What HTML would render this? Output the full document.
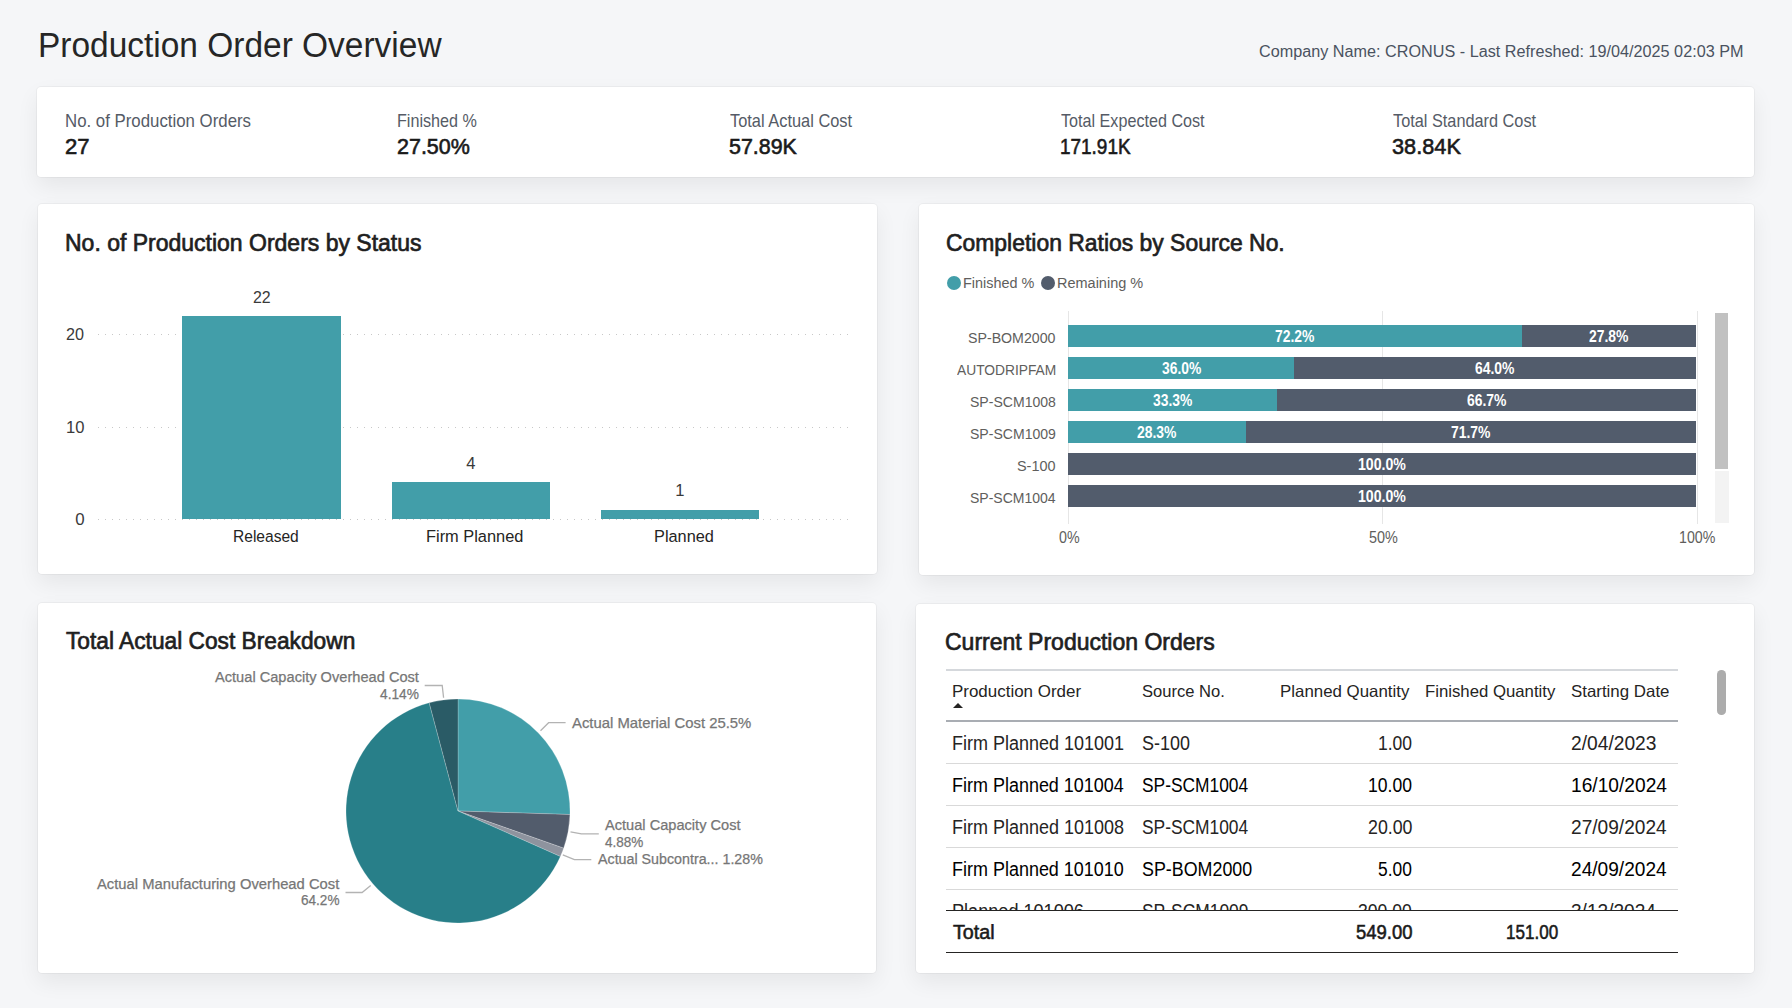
<!DOCTYPE html>
<html><head><meta charset="utf-8"><title>Production Order Overview</title>
<style>
html,body{margin:0;padding:0;}
body{width:1792px;height:1008px;background:#f5f6f8;position:relative;overflow:hidden;font-family:"Liberation Sans", sans-serif;}
.card{position:absolute;background:#fff;border-radius:4px;box-shadow:0 0 0 1px rgba(0,0,0,0.035),0 9px 22px rgba(0,0,0,0.065);}
.t{position:absolute;white-space:nowrap;line-height:1;transform-origin:0 0;}
.r{position:absolute;}
.grid{position:absolute;left:98px;width:751px;height:1px;background-image:linear-gradient(to right,#c8c8c8 0 1.3px,transparent 1.3px);background-size:7px 1px;}
.clip{position:absolute;overflow:hidden;}
</style></head><body>
<div class="card" style="left:37.3px;top:86.9px;width:1716.8px;height:89.9px"></div><div class="card" style="left:37.5px;top:203.9px;width:839.3px;height:369.9px"></div><div class="card" style="left:918.5px;top:203.9px;width:835.6px;height:370.9px"></div><div class="card" style="left:37.5px;top:602.5px;width:838.3px;height:370.1px"></div><div class="card" style="left:916px;top:603.5px;width:837.6px;height:369.1px"></div>
<div class="grid" style="top:334.1px;"></div><div class="grid" style="top:426.7px;"></div><div class="grid" style="top:519.2px;"></div><div class="r" style="left:182.2px;top:315.8px;width:158.6px;height:203.3px;background:#429ea9"></div><div class="r" style="left:391.6px;top:482.3px;width:158.6px;height:36.8px;background:#429ea9"></div><div class="r" style="left:600.8px;top:510.0px;width:158.6px;height:9.1px;background:#429ea9"></div><div class="r" style="left:1068.2px;top:311px;width:1px;height:213px;background:#e6e6e6"></div><div class="r" style="left:1382.3px;top:311px;width:1px;height:213px;background:#e6e6e6"></div><div class="r" style="left:1697px;top:311px;width:1px;height:213px;background:#e6e6e6"></div><div class="r" style="left:1068.1px;top:325.1px;width:453.56px;height:22.2px;background:#429ea9"></div><div class="r" style="left:1521.66px;top:325.1px;width:174.64px;height:22.2px;background:#525c6c"></div><div class="r" style="left:1068.1px;top:357.1px;width:226.15px;height:22.2px;background:#429ea9"></div><div class="r" style="left:1294.25px;top:357.1px;width:402.05px;height:22.2px;background:#525c6c"></div><div class="r" style="left:1068.1px;top:389.1px;width:209.19px;height:22.2px;background:#429ea9"></div><div class="r" style="left:1277.29px;top:389.1px;width:419.01px;height:22.2px;background:#525c6c"></div><div class="r" style="left:1068.1px;top:421.1px;width:177.78px;height:22.2px;background:#429ea9"></div><div class="r" style="left:1245.88px;top:421.1px;width:450.42px;height:22.2px;background:#525c6c"></div><div class="r" style="left:1068.10px;top:453.1px;width:628.20px;height:22.2px;background:#525c6c"></div><div class="r" style="left:1068.10px;top:485.1px;width:628.20px;height:22.2px;background:#525c6c"></div><div class="r" style="left:947px;top:275.6px;width:14px;height:14px;border-radius:50%;background:#429ea9"></div><div class="r" style="left:1041px;top:275.6px;width:14px;height:14px;border-radius:50%;background:#525c6c"></div><div class="r" style="left:1715px;top:470.6px;width:13.5px;height:52.8px;background:#f3f3f3"></div><div class="r" style="left:1715px;top:313.2px;width:13px;height:155.6px;background:#c1c1c1"></div><div class="r" style="left:946px;top:669px;width:732px;height:2px;background:#d5d8dc"></div><div class="r" style="left:946px;top:720px;width:732px;height:2px;background:#a9adb3"></div><div class="r" style="left:946px;top:762.8px;width:732px;height:1px;background:#d9d9d9"></div><div class="r" style="left:946px;top:804.9px;width:732px;height:1px;background:#d9d9d9"></div><div class="r" style="left:946px;top:847.0px;width:732px;height:1px;background:#d9d9d9"></div><div class="r" style="left:946px;top:888.8px;width:732px;height:1px;background:#d9d9d9"></div><div class="r" style="left:946px;top:951.8px;width:732px;height:1.5px;background:#252423"></div><div class="r" style="left:952.8px;top:702.7px;width:0;height:0;border-left:5px solid transparent;border-right:5px solid transparent;border-bottom:5.5px solid #252423"></div><div class="r" style="left:1717px;top:670.3px;width:8.7px;height:45px;border-radius:4.35px;background:#acacac"></div>
<svg class="r" style="left:0;top:0" width="1792" height="1008" viewBox="0 0 1792 1008"><path d="M458,811 L458.00,699.00 A112,112 0 0 1 569.94,814.52 Z" fill="#429ea9" stroke="rgba(255,255,255,0.35)" stroke-width="0.6"/><path d="M458,811 L569.94,814.52 A112,112 0 0 1 563.66,848.14 Z" fill="#525c6c" stroke="rgba(255,255,255,0.35)" stroke-width="0.6"/><path d="M458,811 L563.66,848.14 A112,112 0 0 1 560.34,856.51 Z" fill="#8e939e" stroke="rgba(255,255,255,0.35)" stroke-width="0.6"/><path d="M458,811 L560.34,856.51 A112,112 0 1 1 429.19,702.77 Z" fill="#287f89" stroke="rgba(255,255,255,0.35)" stroke-width="0.6"/><path d="M458,811 L429.19,702.77 A112,112 0 0 1 458.00,699.00 Z" fill="#2a5b66" stroke="rgba(255,255,255,0.35)" stroke-width="0.6"/><polyline points="424.7,685.5 442.2,685.5 443.6,697.8" fill="none" stroke="#b3b3b3" stroke-width="1.3"/><polyline points="540.5,730.7 548.6,722.7 565.6,722.7" fill="none" stroke="#b3b3b3" stroke-width="1.3"/><polyline points="570.5,831.8 581.4,833.9 598.8,833.9" fill="none" stroke="#b3b3b3" stroke-width="1.3"/><polyline points="562.8,854.9 574.4,859.7 591.3,859.7" fill="none" stroke="#b3b3b3" stroke-width="1.3"/><polyline points="345.5,892.5 362.1,892.5 370.7,885.5" fill="none" stroke="#b3b3b3" stroke-width="1.3"/></svg>
<div class="t" style="left:37.99px;top:27.65px;font-size:35.47px;color:#262626;transform:scaleX(0.9434);">Production Order Overview</div><div class="t" style="left:1259.49px;top:43.44px;font-size:16.42px;color:#4a5260;transform:scaleX(0.9875);">Company Name: CRONUS - Last Refreshed: 19/04/2025 02:03 PM</div><div class="t" style="left:64.79px;top:112.63px;font-size:17.73px;color:#555b66;transform:scaleX(0.9491);">No. of Production Orders</div><div class="t" style="left:65.06px;top:136.42px;font-size:22.09px;color:#1a1a1a;-webkit-text-stroke:0.6px #1a1a1a;">27</div><div class="t" style="left:396.74px;top:112.63px;font-size:17.73px;color:#555b66;transform:scaleX(0.9119);">Finished %</div><div class="t" style="left:396.99px;top:136.42px;font-size:22.09px;color:#1a1a1a;-webkit-text-stroke:0.6px #1a1a1a;transform:scaleX(0.9729);">27.50%</div><div class="t" style="left:729.74px;top:112.63px;font-size:17.73px;color:#555b66;transform:scaleX(0.9252);">Total Actual Cost</div><div class="t" style="left:729.33px;top:136.42px;font-size:22.09px;color:#1a1a1a;-webkit-text-stroke:0.6px #1a1a1a;transform:scaleX(0.9697);">57.89K</div><div class="t" style="left:1061.15px;top:112.63px;font-size:17.73px;color:#555b66;transform:scaleX(0.9112);">Total Expected Cost</div><div class="t" style="left:1060.22px;top:136.42px;font-size:22.09px;color:#1a1a1a;-webkit-text-stroke:0.6px #1a1a1a;transform:scaleX(0.8576);">171.91K</div><div class="t" style="left:1392.75px;top:112.63px;font-size:17.73px;color:#555b66;transform:scaleX(0.9195);">Total Standard Cost</div><div class="t" style="left:1392.32px;top:136.42px;font-size:22.09px;color:#1a1a1a;-webkit-text-stroke:0.6px #1a1a1a;transform:scaleX(0.9842);">38.84K</div><div class="t" style="left:65.10px;top:231.79px;font-size:23.55px;color:#1f1f1f;-webkit-text-stroke:0.7px #1f1f1f;transform:scaleX(0.9764);">No. of Production Orders by Status</div><div class="t" style="left:945.53px;top:231.79px;font-size:23.55px;color:#1f1f1f;-webkit-text-stroke:0.7px #1f1f1f;transform:scaleX(0.9730);">Completion Ratios by Source No.</div><div class="t" style="left:66.14px;top:630.39px;font-size:23.55px;color:#1f1f1f;-webkit-text-stroke:0.7px #1f1f1f;transform:scaleX(0.9651);">Total Actual Cost Breakdown</div><div class="t" style="left:944.52px;top:631.13px;font-size:23.26px;color:#1f1f1f;-webkit-text-stroke:0.7px #1f1f1f;transform:scaleX(0.9893);">Current Production Orders</div><div class="t" style="left:66.49px;top:326.57px;font-size:16.86px;color:#3a3a3a;transform:scaleX(0.9605);">20</div><div class="t" style="left:65.86px;top:420.07px;font-size:16.86px;color:#3a3a3a;transform:scaleX(0.9838);">10</div><div class="t" style="left:75.14px;top:511.77px;font-size:16.86px;color:#3a3a3a;">0</div><div class="t" style="left:252.65px;top:289.72px;font-size:16.57px;color:#3a3a3a;transform:scaleX(0.9628);">22</div><div class="t" style="left:466.17px;top:455.57px;font-size:16.57px;color:#3a3a3a;">4</div><div class="t" style="left:675.21px;top:483.32px;font-size:16.57px;color:#3a3a3a;">1</div><div class="t" style="left:233.08px;top:528.97px;font-size:16.86px;color:#252423;transform:scaleX(0.9235);">Released</div><div class="t" style="left:426.22px;top:528.97px;font-size:16.86px;color:#252423;transform:scaleX(0.9714);">Firm Planned</div><div class="t" style="left:654.13px;top:528.97px;font-size:16.86px;color:#252423;transform:scaleX(0.9679);">Planned</div><div class="t" style="left:962.87px;top:275.99px;font-size:14.90px;color:#605e5c;transform:scaleX(0.9675);">Finished %</div><div class="t" style="left:1056.97px;top:275.99px;font-size:14.90px;color:#605e5c;transform:scaleX(0.9730);">Remaining %</div><div class="t" style="left:968.06px;top:329.68px;font-size:15.55px;color:#605e5c;transform:scaleX(0.9119);">SP-BOM2000</div><div class="t" style="left:956.80px;top:361.68px;font-size:15.55px;color:#605e5c;transform:scaleX(0.8865);">AUTODRIPFAM</div><div class="t" style="left:969.86px;top:393.68px;font-size:15.55px;color:#605e5c;transform:scaleX(0.9035);">SP-SCM1008</div><div class="t" style="left:969.86px;top:425.68px;font-size:15.55px;color:#605e5c;transform:scaleX(0.9035);">SP-SCM1009</div><div class="t" style="left:1017.05px;top:457.68px;font-size:15.55px;color:#605e5c;transform:scaleX(0.9279);">S-100</div><div class="t" style="left:969.86px;top:489.68px;font-size:15.55px;color:#605e5c;transform:scaleX(0.9012);">SP-SCM1004</div><div class="t" style="left:1058.55px;top:529.73px;font-size:15.84px;color:#605e5c;transform:scaleX(0.9005);">0%</div><div class="t" style="left:1368.55px;top:529.73px;font-size:15.84px;color:#605e5c;transform:scaleX(0.9108);">50%</div><div class="t" style="left:1679.11px;top:529.73px;font-size:15.84px;color:#605e5c;transform:scaleX(0.8961);">100%</div><div class="t" style="left:1275.05px;top:329.31px;font-size:15.99px;color:#ffffff;font-weight:bold;transform:scaleX(0.8698);">72.2%</div><div class="t" style="left:1589.15px;top:329.31px;font-size:15.99px;color:#ffffff;font-weight:bold;transform:scaleX(0.8698);">27.8%</div><div class="t" style="left:1161.56px;top:361.31px;font-size:15.99px;color:#ffffff;font-weight:bold;transform:scaleX(0.8650);">36.0%</div><div class="t" style="left:1475.44px;top:361.31px;font-size:15.99px;color:#ffffff;font-weight:bold;transform:scaleX(0.8698);">64.0%</div><div class="t" style="left:1153.08px;top:393.31px;font-size:15.99px;color:#ffffff;font-weight:bold;transform:scaleX(0.8650);">33.3%</div><div class="t" style="left:1466.96px;top:393.31px;font-size:15.99px;color:#ffffff;font-weight:bold;transform:scaleX(0.8698);">66.7%</div><div class="t" style="left:1137.16px;top:425.31px;font-size:15.99px;color:#ffffff;font-weight:bold;transform:scaleX(0.8698);">28.3%</div><div class="t" style="left:1451.26px;top:425.31px;font-size:15.99px;color:#ffffff;font-weight:bold;transform:scaleX(0.8698);">71.7%</div><div class="t" style="left:1357.92px;top:457.31px;font-size:15.99px;color:#ffffff;font-weight:bold;transform:scaleX(0.8830);">100.0%</div><div class="t" style="left:1357.92px;top:489.31px;font-size:15.99px;color:#ffffff;font-weight:bold;transform:scaleX(0.8830);">100.0%</div><div class="t" style="left:214.80px;top:670.20px;font-size:14.83px;color:#767676;-webkit-text-stroke:0.25px #767676;transform:scaleX(0.9858);">Actual Capacity Overhead Cost</div><div class="t" style="left:380.29px;top:686.60px;font-size:14.83px;color:#767676;-webkit-text-stroke:0.25px #767676;transform:scaleX(0.9247);">4.14%</div><div class="t" style="left:571.90px;top:715.67px;font-size:14.97px;color:#767676;-webkit-text-stroke:0.25px #767676;transform:scaleX(0.9932);">Actual Material Cost 25.5%</div><div class="t" style="left:605.20px;top:818.05px;font-size:14.53px;color:#767676;-webkit-text-stroke:0.25px #767676;transform:scaleX(1.0062);">Actual Capacity Cost</div><div class="t" style="left:604.99px;top:834.85px;font-size:14.53px;color:#767676;-webkit-text-stroke:0.25px #767676;transform:scaleX(0.9321);">4.88%</div><div class="t" style="left:597.80px;top:851.85px;font-size:14.53px;color:#767676;-webkit-text-stroke:0.25px #767676;transform:scaleX(0.9825);">Actual Subcontra... 1.28%</div><div class="t" style="left:96.60px;top:876.90px;font-size:14.83px;color:#767676;-webkit-text-stroke:0.25px #767676;transform:scaleX(0.9965);">Actual Manufacturing Overhead Cost</div><div class="t" style="left:300.76px;top:892.85px;font-size:14.53px;color:#767676;-webkit-text-stroke:0.25px #767676;transform:scaleX(0.9352);">64.2%</div><div class="t" style="left:952.42px;top:683.99px;font-size:16.72px;color:#252423;transform:scaleX(1.0147);">Production Order</div><div class="t" style="left:1141.58px;top:683.99px;font-size:16.72px;color:#252423;transform:scaleX(0.9916);">Source No.</div><div class="t" style="left:1280.48px;top:683.99px;font-size:16.72px;color:#252423;transform:scaleX(1.0100);">Planned Quantity</div><div class="t" style="left:1425.39px;top:683.99px;font-size:16.72px;color:#252423;transform:scaleX(1.0026);">Finished Quantity</div><div class="t" style="left:1571.07px;top:683.99px;font-size:16.72px;color:#252423;transform:scaleX(1.0098);">Starting Date</div><div class="t" style="left:952.34px;top:734.10px;font-size:19.77px;color:#252423;transform:scaleX(0.9107);">Firm Planned 101001</div><div class="t" style="left:1141.54px;top:734.10px;font-size:19.77px;color:#252423;transform:scaleX(0.9082);">S-100</div><div class="t" style="left:1378.01px;top:734.10px;font-size:19.77px;color:#252423;transform:scaleX(0.8845);">1.00</div><div class="t" style="left:1570.80px;top:734.10px;font-size:19.77px;color:#252423;transform:scaleX(0.9720);">2/04/2023</div><div class="t" style="left:952.35px;top:776.10px;font-size:19.77px;color:#000000;transform:scaleX(0.9092);">Firm Planned 101004</div><div class="t" style="left:1141.56px;top:776.10px;font-size:19.77px;color:#000000;transform:scaleX(0.8785);">SP-SCM1004</div><div class="t" style="left:1368.10px;top:776.10px;font-size:19.77px;color:#000000;transform:scaleX(0.8882);">10.00</div><div class="t" style="left:1570.50px;top:776.10px;font-size:19.77px;color:#000000;transform:scaleX(0.9701);">16/10/2024</div><div class="t" style="left:952.34px;top:818.10px;font-size:19.77px;color:#252423;transform:scaleX(0.9107);">Firm Planned 101008</div><div class="t" style="left:1141.56px;top:818.10px;font-size:19.77px;color:#252423;transform:scaleX(0.8785);">SP-SCM1004</div><div class="t" style="left:1367.57px;top:818.10px;font-size:19.77px;color:#252423;transform:scaleX(0.8991);">20.00</div><div class="t" style="left:1570.80px;top:818.10px;font-size:19.77px;color:#252423;transform:scaleX(0.9670);">27/09/2024</div><div class="t" style="left:952.35px;top:860.10px;font-size:19.77px;color:#000000;transform:scaleX(0.9092);">Firm Planned 101010</div><div class="t" style="left:1141.54px;top:860.10px;font-size:19.77px;color:#000000;transform:scaleX(0.9036);">SP-BOM2000</div><div class="t" style="left:1378.16px;top:860.10px;font-size:19.77px;color:#000000;transform:scaleX(0.8805);">5.00</div><div class="t" style="left:1570.80px;top:860.10px;font-size:19.77px;color:#000000;transform:scaleX(0.9670);">24/09/2024</div><div class="t" style="left:952.34px;top:902.10px;font-size:19.77px;color:#252423;transform:scaleX(0.9160);">Planned 101006</div><div class="t" style="left:1141.56px;top:902.10px;font-size:19.77px;color:#252423;transform:scaleX(0.8808);">SP-SCM1009</div><div class="t" style="left:1358.25px;top:902.10px;font-size:19.77px;color:#252423;transform:scaleX(0.8896);">300.00</div><div class="t" style="left:1571.10px;top:902.10px;font-size:19.77px;color:#252423;transform:scaleX(0.9651);">3/12/2024</div><div class="t" style="left:953.19px;top:923.34px;font-size:19.48px;color:#1a1a1a;-webkit-text-stroke:0.55px #1a1a1a;transform:scaleX(1.0113);">Total</div><div class="t" style="left:1355.92px;top:923.34px;font-size:19.48px;color:#1a1a1a;-webkit-text-stroke:0.55px #1a1a1a;transform:scaleX(0.9491);">549.00</div><div class="t" style="left:1505.93px;top:923.34px;font-size:19.48px;color:#1a1a1a;-webkit-text-stroke:0.55px #1a1a1a;transform:scaleX(0.8761);">151.00</div>
<div class="r" style="left:946px;top:910.5px;width:732px;height:13px;background:#fff"></div><div class="r" style="left:946px;top:909.8px;width:732px;height:1.6px;background:#252423"></div>
</body></html>
